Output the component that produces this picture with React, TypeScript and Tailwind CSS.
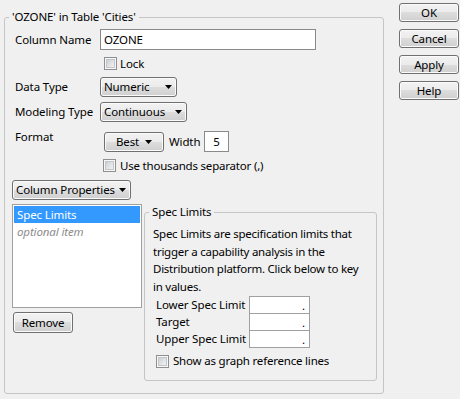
import React from "react";

const btn =
  "border border-[#707070] rounded-[3px] bg-[linear-gradient(to_bottom,#f2f2f2_0%,#ebebeb_50%,#dddddd_50%,#cfcfcf_100%)] shadow-[inset_0_0_0_1px_#fbfbfb]";

function Tri() {
  return (
    <svg width="7" height="4" viewBox="0 0 7 4" className="shrink-0">
      <polygon points="0,0 7,0 3.5,4" fill="#000" />
    </svg>
  );
}

function Check() {
  return (
    <span className="w-[13px] h-[13px] border border-[#8f8f8f] bg-[#f8f8f8] p-[1px] flex shrink-0">
      <span className="flex-1 border border-[#c2c5c9] bg-[linear-gradient(135deg,#cdd0d4,#f2f2f2)]" />
    </span>
  );
}

function Drop({ w, label, center }: { w: string; label: string; center?: boolean }) {
  return (
    <div
      className={`${btn} ${w} h-[20px] flex items-center shrink-0 ${
        center ? "justify-center gap-[6px]" : "justify-between pl-[3px] pr-[4px]"
      }`}
    >
      <span>{label}</span>
      <Tri />
    </div>
  );
}

export default function App() {
  return (
    <div className="w-[460px] h-[399px] bg-[#f0f0f0] flex items-start text-[11.5px] tracking-[-0.12px] text-black font-['Segoe_UI','Noto_Sans',sans-serif] leading-[16px] whitespace-nowrap overflow-hidden">
      <fieldset className="ml-[4px] mt-[9px] w-[380px] h-[385px] border border-[#c5c5c5] rounded-[3px] shrink-0">
        <legend className="ml-[4px] px-[3px] leading-[16px]">'OZONE' in Table 'Cities'</legend>
        <div className="pl-[10px] pt-[4px] flex flex-col">
          <div className="flex items-center h-[21px]">
            <span className="w-[85px] shrink-0">Column Name</span>
            <div className="w-[216px] h-[21px] border border-[#8a8a8a] bg-white pl-[3px] flex items-center">OZONE</div>
          </div>
          <div className="mt-[7px] h-[13px] flex items-center pl-[89px]">
            <Check />
            <span className="ml-[3px]">Lock</span>
          </div>
          <div className="mt-[7px] flex items-center h-[20px]">
            <span className="w-[85px] shrink-0">Data Type</span>
            <Drop w="w-[77px]" label="Numeric" />
          </div>
          <div className="mt-[5px] flex items-center h-[20px]">
            <span className="w-[85px] shrink-0">Modeling Type</span>
            <Drop w="w-[87px]" label="Continuous" />
          </div>
          <div className="mt-[9px] flex items-start h-[20px]">
            <span className="w-[85px] shrink-0 -mt-[2px]">Format</span>
            <div className="ml-[4px] flex items-center">
              <Drop w="w-[60px]" label="Best" center />
              <span className="ml-[5px] w-[35px] shrink-0">Width</span>
              <div className="w-[25px] h-[21px] border border-[#8a8a8a] bg-white flex items-center justify-center">5</div>
            </div>
          </div>
          <div className="mt-[8px] h-[13px] flex items-center pl-[88px]">
            <Check />
            <span className="ml-[4px] tracking-[-0.2px]">Use thousands separator (,)</span>
          </div>
          <div className="mt-[8px] h-[20px] -ml-[3px] flex">
            <Drop w="w-[119px]" label="Column Properties" />
          </div>
          <div className="mt-[4px] -ml-[3px] flex items-start">
            <div className="flex flex-col w-[130px] shrink-0">
              <div className="h-[104px] border border-[#a0a0a0] bg-white p-[1px] flex flex-col">
                <div className="h-[17px] bg-[#3399ff] text-white pl-[3px] flex items-center">Spec Limits</div>
                <div className="h-[17px] text-[#8c8c8c] italic pl-[3px] flex items-center">optional item</div>
              </div>
              <div className={`${btn} mt-[4px] ml-[1px] w-[60px] h-[21px] flex items-center justify-center`}>Remove</div>
            </div>
            <fieldset className="ml-[2px] w-[233px] h-[177px] border border-[#c5c5c5] rounded-[3px] shrink-0">
              <legend className="ml-[4px] px-[3px] leading-[16px]">Spec Limits</legend>
              <div className="pl-[8px] flex flex-col">
                <p className="mt-[5px] leading-[17.5px] tracking-[-0.25px]">
                  Spec Limits are specification limits that
                  <br />
                  trigger a capability analysis in the
                  <br />
                  Distribution platform. Click below to key
                  <br />
                  in values.
                </p>
                <div className="mt-[1px] pl-[3px] flex flex-col">
                  {["Lower Spec Limit", "Target", "Upper Spec Limit"].map((l, i) => (
                    <div key={l} className={`flex items-center h-[18px] ${i > 0 ? "-mt-[1px]" : ""}`}>
                      <span className="w-[93px] shrink-0">{l}</span>
                      <div className="w-[61px] h-[18px] border border-[#a0a0a0] bg-white flex items-end justify-end pr-[4px] leading-[14px]">.</div>
                    </div>
                  ))}
                  <div className="mt-[7px] h-[12px] flex items-center">
                    <Check />
                    <span className="ml-[4px] tracking-[-0.2px]">Show as graph reference lines</span>
                  </div>
                </div>
              </div>
            </fieldset>
          </div>
        </div>
      </fieldset>
      <div className="ml-[15px] mt-[3px] flex flex-col gap-[7px]">
        {["OK", "Cancel", "Apply", "Help"].map((b) => (
          <div key={b} className={`${btn} w-[60px] h-[19px] flex items-center justify-center`}>
            {b}
          </div>
        ))}
      </div>
    </div>
  );
}
